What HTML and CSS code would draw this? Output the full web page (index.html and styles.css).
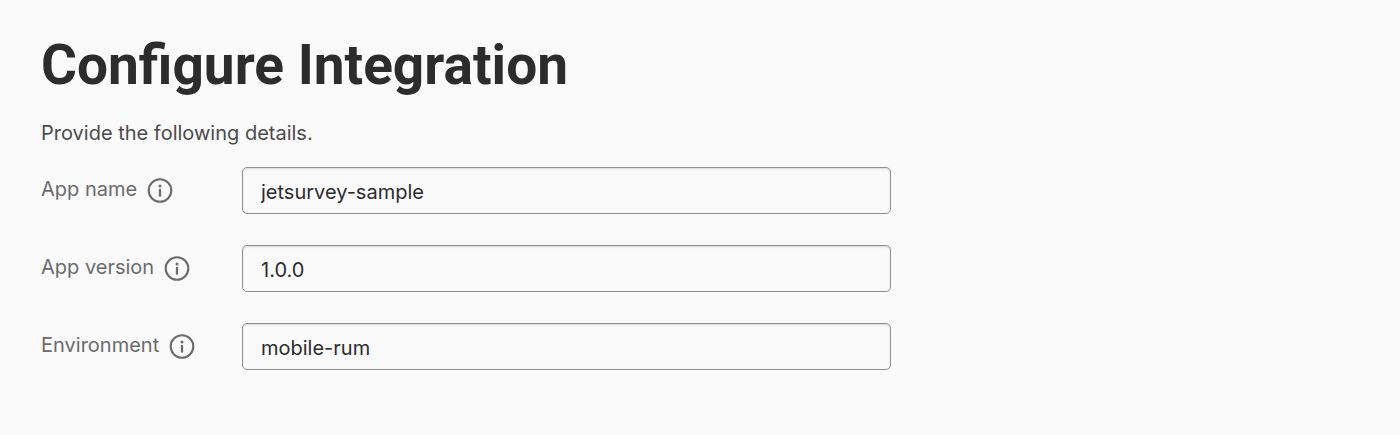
FILE: index.html
```html
<!DOCTYPE html>
<html lang="en">
<head>
<meta charset="utf-8">
<title>Configure Integration</title>
<link rel="stylesheet" href="styles.css">
</head>
<body>
<main class="page">
  <h1 class="title">Configure Integration</h1>
  <p class="intro">Provide the following details.</p>
  <form class="form">
    <div class="row">
      <div class="label-group">
        <label class="label" for="app-name">App name</label>
        <button class="info" type="button" aria-label="About app name"><svg class="info-icon" viewBox="0 0 26 26"><circle cx="13" cy="12.5" r="11.3" fill="none" stroke="currentColor" stroke-width="2.1"/><circle cx="13" cy="8" r="1.5" fill="currentColor"/><path d="M13 12V17.7" stroke="currentColor" stroke-width="2.3" stroke-linecap="round"/></svg></button>
      </div>
      <input class="field" id="app-name" type="text" value="jetsurvey-sample">
    </div>
    <div class="row">
      <div class="label-group">
        <label class="label" for="app-version">App version</label>
        <button class="info" type="button" aria-label="About app version"><svg class="info-icon" viewBox="0 0 26 26"><circle cx="13" cy="12.5" r="11.3" fill="none" stroke="currentColor" stroke-width="2.1"/><circle cx="13" cy="8" r="1.5" fill="currentColor"/><path d="M13 12V17.7" stroke="currentColor" stroke-width="2.3" stroke-linecap="round"/></svg></button>
      </div>
      <input class="field" id="app-version" type="text" value="1.0.0">
    </div>
    <div class="row">
      <div class="label-group">
        <label class="label" for="environment">Environment</label>
        <button class="info" type="button" aria-label="About environment"><svg class="info-icon" viewBox="0 0 26 26"><circle cx="13" cy="12.5" r="11.3" fill="none" stroke="currentColor" stroke-width="2.1"/><circle cx="13" cy="8" r="1.5" fill="currentColor"/><path d="M13 12V17.7" stroke="currentColor" stroke-width="2.3" stroke-linecap="round"/></svg></button>
      </div>
      <input class="field" id="environment" type="text" value="mobile-rum">
    </div>
  </form>
</main>
</body>
</html>
```
FILE: styles.css
```css
* { box-sizing: border-box; }
body {
  margin: 0;
  background: #fafafa;
  color: #2c2c2d;
  font-family: Inter, "Noto Sans", sans-serif;
}
.page { padding: 32px 41px; }
.title {
  margin: 0;
  font-family: Roboto, "Liberation Sans", sans-serif;
  font-size: 55px;
  line-height: 66px;
  font-weight: 700;
}
.intro {
  margin: 21px 0 20px;
  font-size: 20px;
  line-height: 28px;
  color: #4a4a4c;
}
.form {
  display: grid;
  gap: 31px;
  max-width: 850px;
}
.row {
  display: grid;
  grid-template-columns: 201px 1fr;
}
.label-group {
  display: flex;
  align-items: center;
  gap: 10px;
}
.label {
  padding-bottom: 3px;
  font-size: 20px;
  line-height: 28px;
  color: #6b6b6d;
}
.info {
  display: flex;
  padding: 0;
  border: 0;
  background: none;
  color: #6b6b6d;
}
.info-icon { width: 26px; height: 26px; }
.field {
  width: 100%;
  height: 47px;
  padding: 2px 18px 0;
  border: 1px solid #909092;
  border-radius: 5px;
  background: #fafafa;
  box-shadow: inset 0 1px 2px #d8d8d8;
  color: #2c2c2d;
  font: inherit;
  font-size: 20px;
}
```
